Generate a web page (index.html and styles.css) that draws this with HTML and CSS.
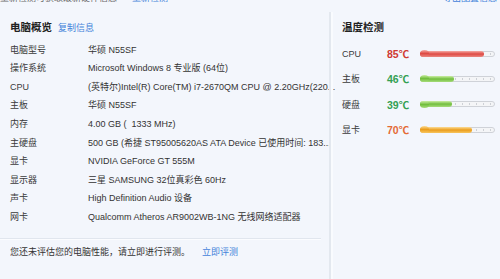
FILE: index.html
```html
<!DOCTYPE html>
<html lang="zh-CN">
<head>
<meta charset="utf-8">
<title>电脑概览</title>
<link rel="stylesheet" href="styles.css">
</head>
<body>
<div class="page">
  <div class="topbar">
    <div class="top-left"><span class="muted">重新检测可获取最新硬件信息</span><a class="link top-link">重新检测</a></div>
    <a class="link">导出配置信息</a>
  </div>
  <div class="main">
    <section class="overview">
      <div class="overview-body">
        <h2 class="title">电脑概览<a class="link title-link">复制信息</a></h2>
        <ul class="specs">
          <li><span class="k">电脑型号</span><span class="v">华硕 N55SF</span></li>
          <li><span class="k">操作系统</span><span class="v">Microsoft Windows 8 专业版 (64位)</span></li>
          <li><span class="k">CPU</span><span class="v">(英特尔)Intel(R) Core(TM) i7-2670QM CPU @ 2.20GHz(220...</span></li>
          <li><span class="k">主板</span><span class="v">华硕 N55SF</span></li>
          <li><span class="k">内存</span><span class="v">4.00 GB (&nbsp;&nbsp;1333 MHz)</span></li>
          <li><span class="k">主硬盘</span><span class="v">500 GB (希捷 ST95005620AS ATA Device 已使用时间: 183...</span></li>
          <li><span class="k">显卡</span><span class="v">NVIDIA GeForce GT 555M</span></li>
          <li><span class="k">显示器</span><span class="v">三星 SAMSUNG 32位真彩色 60Hz</span></li>
          <li><span class="k">声卡</span><span class="v">High Definition Audio 设备</span></li>
          <li><span class="k">网卡</span><span class="v">Qualcomm Atheros AR9002WB-1NG 无线网络适配器</span></li>
        </ul>
      </div>
      <div class="notice">您还未评估您的电脑性能，请立即进行评测。<a class="link notice-link">立即评测</a></div>
    </section>
    <aside class="temps">
      <h2 class="title">温度检测</h2>
      <ul class="temp-list">
        <li><span class="tk">CPU</span><span class="tv hot">85℃</span><span class="bar"><span class="fill red" style="width:87%"></span></span></li>
        <li><span class="tk">主板</span><span class="tv ok">46℃</span><span class="bar"><span class="fill green" style="width:47%"></span></span></li>
        <li><span class="tk">硬盘</span><span class="tv ok">39℃</span><span class="bar"><span class="fill green" style="width:44%"></span></span></li>
        <li><span class="tk">显卡</span><span class="tv warm">70℃</span><span class="bar"><span class="fill orange" style="width:71%"></span></span></li>
      </ul>
    </aside>
  </div>
</div>
</body>
</html>
```

FILE: styles.css
```css
* { box-sizing: border-box; }
html, body { margin: 0; padding: 0; }
body {
  width: 500px;
  height: 279px;
  overflow: hidden;
  background: #f3f6fc;
  font-family: "Liberation Sans", "Noto Sans CJK SC", sans-serif;
  font-size: 9px;
  color: #3a3a3a;
}
.page { display: flex; flex-direction: column; height: 279px; }
.topbar {
  display: flex;
  justify-content: space-between;
  margin-top: -7px;
  height: 19px;
  line-height: 10px;
  padding-right: 3px;
}
.muted { color: #6a6a6a; }
.link { color: #4383da; text-decoration: none; }
.top-link { margin-left: 15px; }
.main { display: flex; flex: 1; }
.overview {
  width: 329px;
  display: flex;
  flex-direction: column;
}
.overview-body { padding-left: 10px; }
.title {
  margin: 0;
  padding-top: 5px;
  height: 25px;
  line-height: 20px;
  font-size: 10.5px;
  font-weight: bold;
  color: #222;
  font-family: "Noto Sans CJK SC", sans-serif;
}
.title-link { font-weight: normal; font-size: 9px; margin-left: 6px; }
.specs { list-style: none; margin: 3.7px 0 0; padding: 0; }
.specs li { display: flex; height: 18.6px; line-height: 18.6px; white-space: nowrap; }
.k { width: 78px; flex: none; }
.v { color: #333; }
.notice {
  margin-top: 11px;
  width: 321px;
  border-top: 1px solid #e1e6ee;
  box-shadow: inset 0 1px 0 #fbfcff;
  padding: 5px 0 0 10px;
  line-height: 16px;
  color: #333;
}
.notice-link { margin-left: 12px; }
.temps {
  flex: 1;
  border-left: 2px solid #e3e8ef;
  box-shadow: inset 2px 0 0 #f9fbfe;
  padding-left: 11px;
}
.temp-list { list-style: none; margin: 4px 0 0; padding: 0; }
.temp-list li { display: flex; align-items: center; height: 25.3px; }
.tk { width: 45px; flex: none; }
.tv { width: 33px; flex: none; font-size: 10.5px; font-weight: bold; }
.hot { color: #cf3a33; }
.ok { color: #33a052; }
.warm { color: #e46a35; }
.bar {
  position: relative;
  width: 75px;
  height: 6px;
  border: 1px solid #cfd2d8;
  border-radius: 3px;
  background:
    repeating-linear-gradient(90deg, transparent 0 6px, #cdd0d5 6px 7px) center / 100% 2px no-repeat,
    #f4f5f7;
}
.fill {
  position: absolute;
  left: -1px;
  top: -1px;
  height: 6px;
  border-radius: 3px;
}
.fill::before {
  content: "";
  position: absolute;
  left: 0;
  top: -0.5px;
  width: 9px;
  height: 7px;
  border-radius: 50%;
  background: inherit;
}
.red { background: linear-gradient(#f6aaa4, #de4a44 50%, #eb8780); }
.green { background: linear-gradient(#cbeea3, #72be3e 50%, #a6dc7a); }
.orange { background: linear-gradient(#fcdc95, #eb9d1c 50%, #f7c55e); }
```
